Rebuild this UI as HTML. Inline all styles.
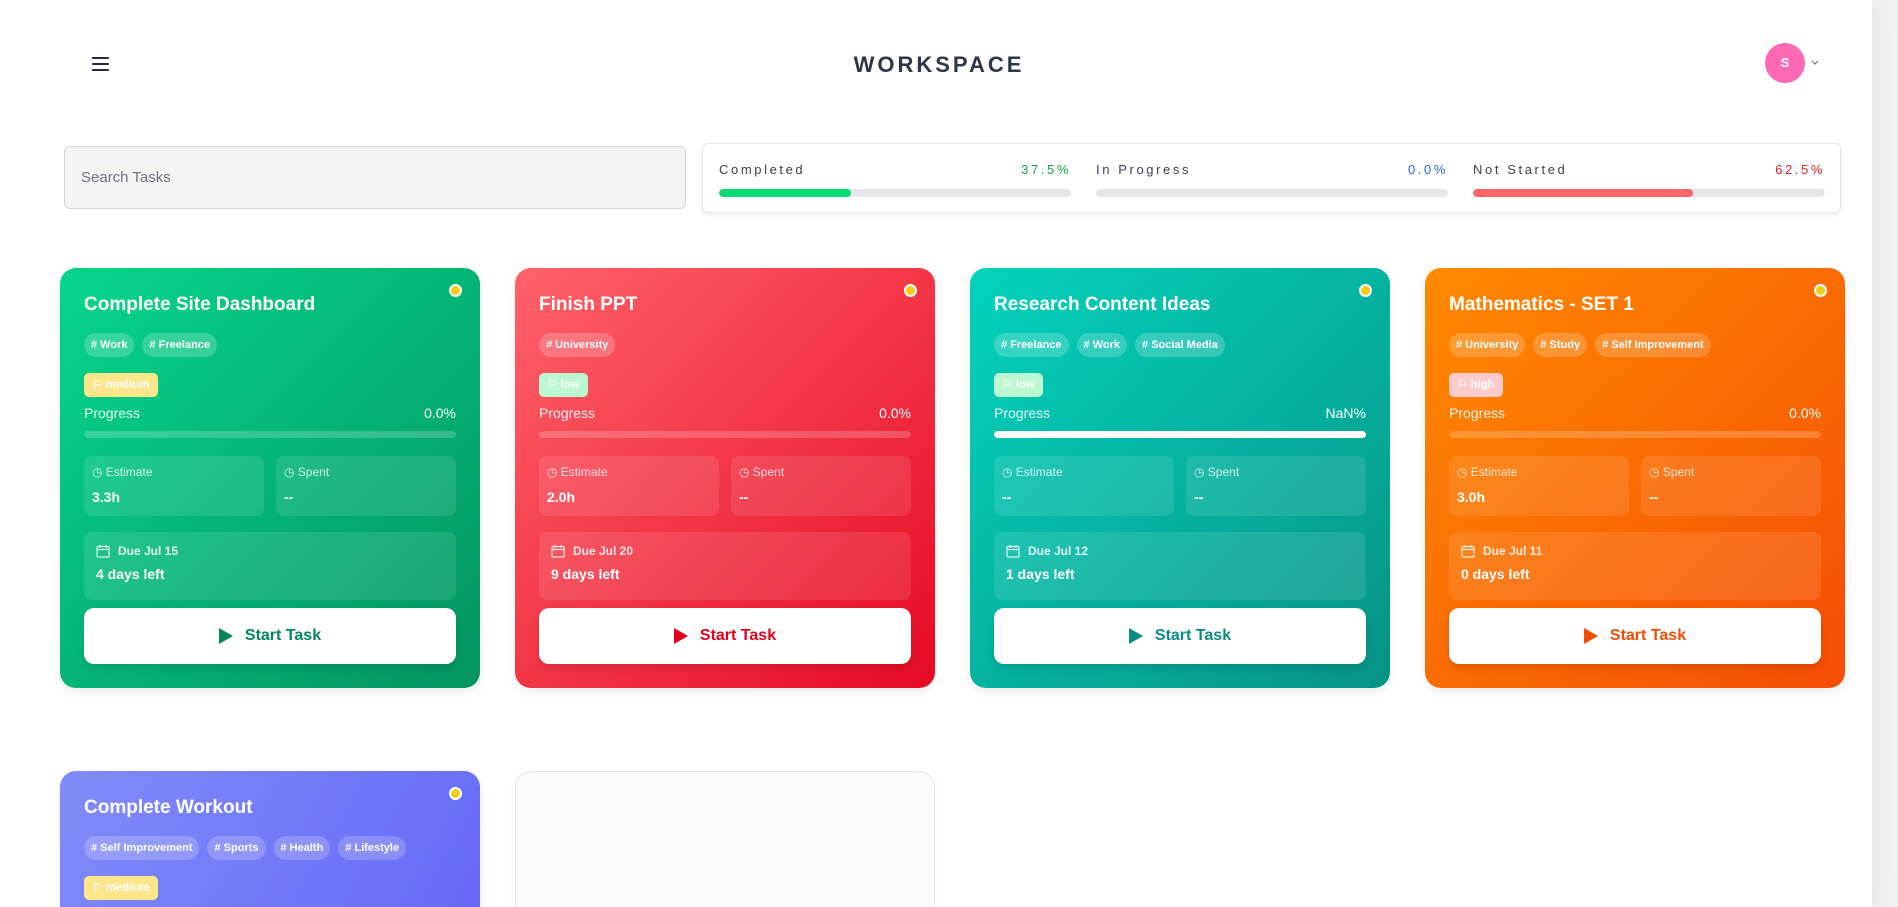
<!DOCTYPE html>
<html><head><meta charset="utf-8"><style>
*{box-sizing:border-box;margin:0;padding:0}
html,body{width:1898px;height:907px;overflow:hidden}
body{background:#f1f1f2;font-family:"Liberation Sans",sans-serif;position:relative}
.wrap{position:absolute;left:0;top:0;width:1872px;height:907px;background:#fff;box-shadow:0 0 28px rgba(0,0,0,.07);overflow:hidden}
.abs{position:absolute}
.ham{left:92px;top:57px;width:17px}
.ham i{display:block;height:2px;background:#1f2937;margin-bottom:4px;border-radius:1px}
.title{left:0;width:1878px;top:52px;text-align:center;font-size:22px;font-weight:bold;letter-spacing:3px;color:#2d3748}
.av{left:1765px;top:43px;width:40px;height:40px;border-radius:50%;background:#ff69b4;color:#fff;font-size:13px;text-align:center;line-height:40px;font-weight:bold}
.search{left:64px;top:146px;width:622px;height:63px;background:#f3f4f6;border:1px solid #d1d5db;border-radius:6px;font-size:15px;color:#6b7280;padding:22px 16px}
.stats{left:702px;top:143px;width:1139px;height:70px;background:#fff;border:1px solid #e5e7eb;border-radius:6px;box-shadow:0 2px 4px rgba(0,0,0,.08)}
.col{position:absolute;top:18px;width:352px}
.col .l{font-size:13px;letter-spacing:2.6px;color:#374151;display:flex;justify-content:space-between}
.bar{margin-top:12px;height:8px;background:#e5e7eb;border-radius:4px;overflow:hidden}
.bar b{display:block;height:8px;border-radius:4px}
.card{position:absolute;width:420px;height:420px;border-radius:16px;color:#fff;padding:0 24px;box-shadow:0 4px 10px rgba(0,0,0,.08);overflow:hidden}
.dot{position:absolute;right:18px;top:16px;width:13px;height:13px;border-radius:50%;background:#facc15;border:2px solid #fff}
.ct{position:absolute;left:24px;top:26px;font-size:19px;font-weight:bold}
.tags{position:absolute;left:24px;top:65px;display:flex;gap:8px}
.tag{height:24px;line-height:24px;padding:0 7px;border-radius:12px;background:rgba(255,255,255,.2);font-size:11px;font-weight:bold}
.pri{position:absolute;left:24px;top:105px;height:24px;line-height:24px;padding:0 8px;border-radius:5px;font-size:11.5px;font-weight:bold;display:flex;align-items:center;gap:4px}
.pl{position:absolute;left:24px;right:24px;top:137px;font-size:14px;display:flex;justify-content:space-between}
.pl span:first-child{opacity:.9}
.pb{position:absolute;left:24px;right:24px;top:163px;height:7px;border-radius:4px;background:rgba(255,255,255,.2)}
.bx{position:absolute;top:188px;width:180px;height:60px;border-radius:8px;background:rgba(255,255,255,.1);padding:9px 8px}
.bx .a{font-size:12px;opacity:.8;display:flex;align-items:center;gap:4px}
.bx .v{font-size:14px;font-weight:bold;margin-top:10px}
.due{position:absolute;left:24px;right:24px;top:264px;height:68px;border-radius:8px;background:rgba(255,255,255,.1);padding:12px 12px}
.due .a{font-size:12px;opacity:.85;display:flex;align-items:center;gap:8px;font-weight:bold}
.due .v{font-size:14px;font-weight:bold;margin-top:8px}
.btn{position:absolute;left:24px;right:24px;top:340px;height:56px;border-radius:10px;background:#fff;display:flex;align-items:center;justify-content:center;gap:12px;font-size:16px;font-weight:bold;box-shadow:0 4px 8px rgba(0,0,0,.12)}
</style></head><body>
<div class="wrap">
<div class="abs ham"><i></i><i></i><i></i></div>
<div class="abs title">WORKSPACE</div>
<div class="abs av">S</div>
<svg class="abs" style="left:1811px;top:60px" width="8" height="6" viewBox="0 0 8 6"><path d="M1 1l3 3 3-3" stroke="#6b7280" stroke-width="1.2" fill="none"/></svg>
<div class="abs search">Search Tasks</div>
<div class="abs stats">
 <div class="col" style="left:16px"><div class="l"><span>Completed</span><span style="color:#16a34a">37.5%</span></div><div class="bar"><b style="width:37.5%;background:#06dc73"></b></div></div>
 <div class="col" style="left:393px"><div class="l"><span>In Progress</span><span style="color:#2563eb">0.0%</span></div><div class="bar"></div></div>
 <div class="col" style="left:770px"><div class="l"><span>Not Started</span><span style="color:#dc2626">62.5%</span></div><div class="bar"><b style="width:62.5%;background:#ff6666"></b></div></div>
</div>

<div class="card" style="left:60px;top:268px;background:linear-gradient(135deg,#06d68c,#03945e)">
 <div class="dot"></div><div class="ct">Complete Site Dashboard</div>
 <div class="tags"><span class="tag"># Work</span><span class="tag"># Freelance</span></div>
 <div class="pri" style="background:#fde68a">⚐ medium</div>
 <div class="pl"><span>Progress</span><span>0.0%</span></div><div class="pb"></div>
 <div class="bx" style="left:24px"><div class="a">◷ Estimate</div><div class="v">3.3h</div></div>
 <div class="bx" style="left:216px"><div class="a">◷ Spent</div><div class="v">--</div></div>
 <div class="due"><div class="a"><svg width="14" height="14" viewBox="0 0 14 14" fill="none" stroke="#fff" stroke-width="1.2"><rect x="1" y="2.5" width="12" height="10.5" rx="1"/><path d="M1 5.5h12M4 1v3M10 1v3"/></svg>Due Jul 15</div><div class="v">4 days left</div></div>
 <div class="btn" style="color:#04875a"><svg width="14" height="16"><path d="M0 0L14 8L0 16Z" fill="#04875a"/></svg>Start Task</div>
</div>

<div class="card" style="left:515px;top:268px;background:linear-gradient(135deg,#ff626a,#e60a22)">
 <div class="dot"></div><div class="ct">Finish PPT</div>
 <div class="tags"><span class="tag"># University</span></div>
 <div class="pri" style="background:#bbf7d0">⚐ low</div>
 <div class="pl"><span>Progress</span><span>0.0%</span></div><div class="pb"></div>
 <div class="bx" style="left:24px"><div class="a">◷ Estimate</div><div class="v">2.0h</div></div>
 <div class="bx" style="left:216px"><div class="a">◷ Spent</div><div class="v">--</div></div>
 <div class="due"><div class="a"><svg width="14" height="14" viewBox="0 0 14 14" fill="none" stroke="#fff" stroke-width="1.2"><rect x="1" y="2.5" width="12" height="10.5" rx="1"/><path d="M1 5.5h12M4 1v3M10 1v3"/></svg>Due Jul 20</div><div class="v">9 days left</div></div>
 <div class="btn" style="color:#e0001b"><svg width="14" height="16"><path d="M0 0L14 8L0 16Z" fill="#e0001b"/></svg>Start Task</div>
</div>

<div class="card" style="left:970px;top:268px;background:linear-gradient(135deg,#03d3bd,#079383)">
 <div class="dot"></div><div class="ct">Research Content Ideas</div>
 <div class="tags"><span class="tag"># Freelance</span><span class="tag"># Work</span><span class="tag"># Social Media</span></div>
 <div class="pri" style="background:#bbf7d0">⚐ low</div>
 <div class="pl"><span>Progress</span><span>NaN%</span></div><div class="pb" style="background:#fff"></div>
 <div class="bx" style="left:24px"><div class="a">◷ Estimate</div><div class="v">--</div></div>
 <div class="bx" style="left:216px"><div class="a">◷ Spent</div><div class="v">--</div></div>
 <div class="due"><div class="a"><svg width="14" height="14" viewBox="0 0 14 14" fill="none" stroke="#fff" stroke-width="1.2"><rect x="1" y="2.5" width="12" height="10.5" rx="1"/><path d="M1 5.5h12M4 1v3M10 1v3"/></svg>Due Jul 12</div><div class="v">1 days left</div></div>
 <div class="btn" style="color:#0a8c80"><svg width="14" height="16"><path d="M0 0L14 8L0 16Z" fill="#0a8c80"/></svg>Start Task</div>
</div>

<div class="card" style="left:1425px;top:268px;background:linear-gradient(135deg,#ff8a00,#f54d05)">
 <div class="dot"></div><div class="ct">Mathematics - SET 1</div>
 <div class="tags"><span class="tag"># University</span><span class="tag"># Study</span><span class="tag"># Self Improvement</span></div>
 <div class="pri" style="background:#fecaca">⚐ high</div>
 <div class="pl"><span>Progress</span><span>0.0%</span></div><div class="pb"></div>
 <div class="bx" style="left:24px"><div class="a">◷ Estimate</div><div class="v">3.0h</div></div>
 <div class="bx" style="left:216px"><div class="a">◷ Spent</div><div class="v">--</div></div>
 <div class="due"><div class="a"><svg width="14" height="14" viewBox="0 0 14 14" fill="none" stroke="#fff" stroke-width="1.2"><rect x="1" y="2.5" width="12" height="10.5" rx="1"/><path d="M1 5.5h12M4 1v3M10 1v3"/></svg>Due Jul 11</div><div class="v">0 days left</div></div>
 <div class="btn" style="color:#f24d05"><svg width="14" height="16"><path d="M0 0L14 8L0 16Z" fill="#f24d05"/></svg>Start Task</div>
</div>

<div class="card" style="left:60px;top:771px;height:136px;border-radius:16px 16px 0 0;background:linear-gradient(120deg,#818cf8,#5b5cf7 140%)">
 <div class="dot"></div><div class="ct">Complete Workout</div>
 <div class="tags"><span class="tag"># Self Improvement</span><span class="tag"># Sports</span><span class="tag"># Health</span><span class="tag"># Lifestyle</span></div>
 <div class="pri" style="background:#fde68a">⚐ medium</div>
</div>
<div class="card" style="left:515px;top:771px;height:136px;border-radius:16px 16px 0 0;background:#f9fafb;border:1px solid #e5e7eb;border-bottom:none;box-shadow:0 2px 8px rgba(0,0,0,.04)"></div>
</div>
</body></html>
